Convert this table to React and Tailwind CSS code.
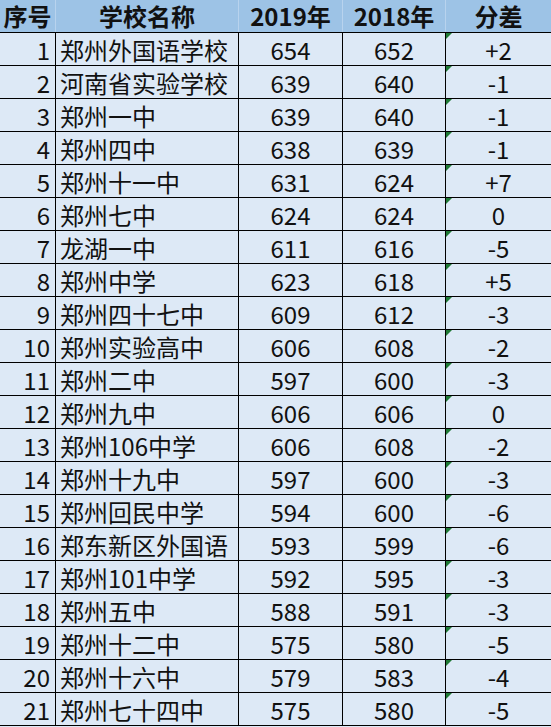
const rows = [
  [1, "郑州外国语学校", 654, 652, "+2"],
  [2, "河南省实验学校", 639, 640, "-1"],
  [3, "郑州一中", 639, 640, "-1"],
  [4, "郑州四中", 638, 639, "-1"],
  [5, "郑州十一中", 631, 624, "+7"],
  [6, "郑州七中", 624, 624, "0"],
  [7, "龙湖一中", 611, 616, "-5"],
  [8, "郑州中学", 623, 618, "+5"],
  [9, "郑州四十七中", 609, 612, "-3"],
  [10, "郑州实验高中", 606, 608, "-2"],
  [11, "郑州二中", 597, 600, "-3"],
  [12, "郑州九中", 606, 606, "0"],
  [13, "郑州106中学", 606, 608, "-2"],
  [14, "郑州十九中", 597, 600, "-3"],
  [15, "郑州回民中学", 594, 600, "-6"],
  [16, "郑东新区外国语", 593, 599, "-6"],
  [17, "郑州101中学", 592, 595, "-3"],
  [18, "郑州五中", 588, 591, "-3"],
  [19, "郑州十二中", 575, 580, "-5"],
  [20, "郑州十六中", 579, 583, "-4"],
  [21, "郑州七十四中", 575, 580, "-5"],
];

const cols = "grid grid-cols-[56px_183px_104px_103px_105px]";

export default function App() {
  return (
    <div
      className="w-[551px] h-[727px] bg-[#dde9f6] text-[#111] overflow-hidden"
      style={{ fontFamily: '"Noto Sans CJK SC", "Noto Sans", sans-serif' }}
    >
      {/* Header */}
      <div className={`${cols} h-[33px] bg-[#9dc3e6] border-b border-black text-[24px] font-bold leading-[32px]`}>
        <div className="text-center border-r border-[#b8d3ee]">序号</div>
        <div className="text-center border-r border-[#b8d3ee]">学校名称</div>
        <div className="text-center border-r border-[#b8d3ee]">2019年</div>
        <div className="text-center border-r border-[#b8d3ee]">2018年</div>
        <div className="text-center">分差</div>
      </div>

      {/* Body */}
      {rows.map(([no, name, a, b, diff]) => (
        <div key={no} className={`${cols} h-[33px] border-b border-black text-[24px] leading-[33px]`}>
          <div className="text-right pr-[5px] border-r border-black">{no}</div>
          <div className="pl-[4px] border-r border-black whitespace-nowrap">{name}</div>
          <div className="text-center border-r border-black">{a}</div>
          <div className="text-center border-r border-black">{b}</div>
          <div className="relative text-center">
            <span className="absolute left-0 top-0 w-0 h-0 border-t-[6px] border-r-[6px] border-t-[#1f7a35] border-r-transparent" />
            {diff}
          </div>
        </div>
      ))}
    </div>
  );
}
